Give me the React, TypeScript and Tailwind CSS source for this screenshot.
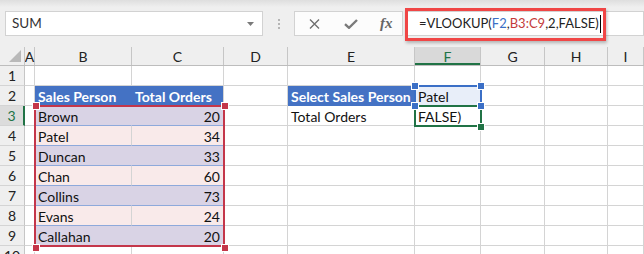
import type { ReactNode } from "react";

const GRID = "border-[#d4d4d4]";

// column widths: A..H, I takes the rest
const cols = [
  { key: "A", w: "w-[10px]" },
  { key: "B", w: "w-[97px]" },
  { key: "C", w: "w-[92px]" },
  { key: "D", w: "w-[64px]" },
  { key: "E", w: "w-[127px]" },
  { key: "F", w: "w-[66px]" },
  { key: "G", w: "w-[64px]" },
  { key: "H", w: "w-[63px]" },
  { key: "I", w: "flex-1" },
];

const people = [
  ["Brown", "20"],
  ["Patel", "34"],
  ["Duncan", "33"],
  ["Chan", "60"],
  ["Collins", "73"],
  ["Evans", "24"],
  ["Callahan", "20"],
];

type CellDef = { text?: ReactNode; cls?: string };

function cellsFor(row: number): Record<string, CellDef> {
  if (row === 2) {
    return {
      B: {
        text: "Sales Person",
        cls: "bg-[#4472c4] border-r-[#4472c4] border-b-[#4472c4] text-white font-bold",
      },
      C: {
        text: "Total Orders",
        cls: "bg-[#4472c4] border-b-[#4472c4] text-white font-bold",
      },
      E: {
        text: "Select Sales Person",
        cls: "bg-[#4472c4] border-b-[#4472c4] text-white font-bold",
      },
      F: { text: "Patel", cls: "bg-[#e8eef9]" },
    };
  }
  if (row === 3) {
    return {
      E: { text: "Total Orders" },
      F: { text: "FALSE)" },
      ...tableRow(row),
    };
  }
  if (row >= 4 && row <= 9) return tableRow(row);
  return {};
}

function tableRow(row: number): Record<string, CellDef> {
  const [name, total] = people[row - 3];
  const odd = row % 2 === 1;
  return {
    B: {
      text: name,
      cls: odd
        ? "bg-[#d9d3e5] border-r-[#d9d3e5] border-b-[#8ea9db]"
        : "bg-[#f9eaea] border-b-[#8ea9db]",
    },
    C: {
      text: total,
      cls: (odd ? "bg-[#d9d3e5]" : "bg-[#f9eaea]") + " border-b-[#8ea9db] justify-end pr-[3px]",
    },
  };
}

function Handle({ className }: { className: string }) {
  return (
    <div
      className={`absolute h-[6px] w-[6px] border border-white box-content ${className}`}
    />
  );
}

function FormulaBar() {
  return (
    <div className="flex h-[47px] items-start bg-[linear-gradient(#dedede,#efefef_7px)] pt-[11px]">
      <div className="ml-[5px] flex h-[25px] w-[258px] items-center border border-[#d2d2d2] bg-white pl-[6px] text-[13.5px] text-[#333]">
        <span className="flex-1">SUM</span>
        <svg width="7" height="4" viewBox="0 0 7 4" className="mr-[8px]">
          <path d="M0 0h7L3.5 4z" fill="#7a7a7a" />
        </svg>
      </div>
      <div className="flex h-[25px] w-[31px] flex-col items-center justify-center gap-[2px]">
        <span className="h-[2px] w-[2px] bg-[#b5b5b5]" />
        <span className="h-[2px] w-[2px] bg-[#b5b5b5]" />
        <span className="h-[2px] w-[2px] bg-[#b5b5b5]" />
      </div>
      <div className="flex h-[25px] w-[109px] items-center border border-[#d2d2d2] bg-[#fcfcfc]">
        <svg width="11" height="10" viewBox="0 0 11 10" className="ml-[14px]">
          <path d="M1 0.5l9 9M10 0.5l-9 9" stroke="#6f6f6f" strokeWidth="1.4" />
        </svg>
        <svg width="14" height="10" viewBox="0 0 14 10" className="ml-[24px]">
          <path d="M1 5.2l4 3.6L13 1" stroke="#7a7a7a" strokeWidth="2.4" fill="none" />
        </svg>
        <span className="ml-[22px] font-['Liberation_Serif',serif] text-[15px] font-bold italic text-[#666]">
          fx
        </span>
      </div>
      <div className="relative ml-[2px] flex h-[25px] flex-1 items-center border border-[#d2d2d2] bg-white pl-[13px] text-[13px] text-[#222]">
        <span>=VLOOKUP(</span>
        <span className="text-[#3b6fc6]">F2</span>
        <span>,</span>
        <span className="text-[#c43a3a]">B3:C9</span>
        <span>,2,FALSE)</span>
        <span className="ml-[1px] h-[18px] w-[1px] bg-black" />
        <div className="absolute left-[-1px] top-[-4px] h-[33px] w-[201px] border-[3px] border-[#f04646] shadow-[1px_2px_3px_rgba(0,0,0,0.25)]" />
      </div>
    </div>
  );
}

function ColumnHeader() {
  return (
    <div className="flex h-[19px] border-b border-[#bdbdbd] bg-[#efefef] text-[14px] text-[#222]">
      <div className="relative w-[25px] border-r border-[#c6c6c6]">
        <svg width="12" height="12" viewBox="0 0 12 12" className="absolute bottom-[3px] right-[3px]">
          <path d="M12 0V12H0z" fill="#b9b9b9" />
        </svg>
      </div>
      {cols.map((c) => (
        <div
          key={c.key}
          className={`flex items-center justify-center border-r border-[#c6c6c6] ${c.w} ${
            c.key === "F"
              ? "bg-[#d9d9d9] text-[#217346] shadow-[inset_0_-2px_0_#217346]"
              : ""
          }`}
        >
          {c.key}
        </div>
      ))}
    </div>
  );
}

function Row({ n }: { n: number }) {
  const cells = cellsFor(n);
  const active = n === 3;
  return (
    <div className="flex h-[20px]">
      <div
        className={`flex w-[25px] items-center justify-center border-b border-r border-b-[#d4d4d4] text-[14px] ${
          active
            ? "border-r-2 border-r-[#217346] bg-[#dcdcdc] text-[#217346]"
            : "border-r-[#c6c6c6] bg-[#efefef] text-[#222]"
        }`}
      >
        {n}
      </div>
      {cols.map((c) => {
        const cell = cells[c.key] ?? {};
        return (
          <div
            key={c.key}
            className={`flex items-center overflow-visible whitespace-nowrap border-b border-r ${GRID} pl-[3px] pt-[1px] text-[14px] text-[#111] ${c.w} ${
              cell.cls ?? ""
            }`}
          >
            {cell.text}
          </div>
        );
      })}
    </div>
  );
}

export default function App() {
  return (
    <div className="h-[254px] w-[644px] overflow-hidden bg-white font-[Lato,'Liberation_Sans',sans-serif]">
      <FormulaBar />
      <ColumnHeader />
      <div className="relative">
        {[1, 2, 3, 4, 5, 6, 7, 8, 9, 10].map((n) => (
          <Row key={n} n={n} />
        ))}
        {/* B3:C9 range highlight */}
        <div className="absolute left-[34px] top-[39px] h-[142px] w-[191px] border-2 border-[#c4364a]" />
        <Handle className="left-[32px] top-[36px] bg-[#c4364a]" />
        <Handle className="left-[221px] top-[36px] bg-[#c4364a]" />
        <Handle className="left-[32px] top-[178px] bg-[#c4364a]" />
        <Handle className="left-[221px] top-[178px] bg-[#c4364a]" />
        {/* F2 reference */}
        <div className="absolute left-[414px] top-[19px] h-[22px] w-[68px] border-2 border-[#3b6fc6]" />
        <Handle className="left-[411px] top-[16px] bg-[#3b6fc6]" />
        <Handle className="left-[477px] top-[16px] bg-[#3b6fc6]" />
        {/* F3 editing */}
        <div className="absolute left-[414px] top-[39px] h-[22px] w-[68px] border-2 border-[#217346]" />
        <Handle className="left-[477px] top-[57px] bg-[#217346]" />
        <Handle className="left-[411px] top-[36px] bg-[#3b6fc6]" />
        <Handle className="left-[477px] top-[36px] bg-[#3b6fc6]" />
      </div>
    </div>
  );
}
